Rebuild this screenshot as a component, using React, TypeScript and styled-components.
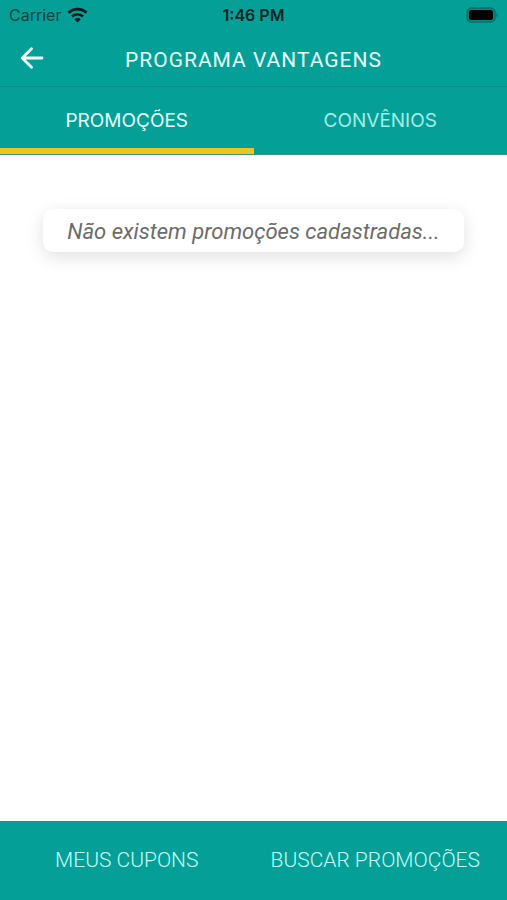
import React from "react";
import styled, { createGlobalStyle } from "styled-components";

const Global = createGlobalStyle`
  * { box-sizing: border-box; }
  html, body { margin: 0; background: #fff; }
  button { font: inherit; color: inherit; background: none; border: 0; padding: 0; cursor: pointer; }
`;

const Screen = styled.div`
  min-height: 100vh;
  display: flex;
  flex-direction: column;
  font-family: Inter, sans-serif;
  background: #fff;
`;

const Header = styled.header`
  background: #04a098;
  color: #e6fffd;
`;

const StatusBar = styled.div`
  height: 30px;
  padding: 0 9px;
  display: grid;
  grid-template-columns: 1fr auto 1fr;
  align-items: center;
  color: #06413e;
  font-size: 16px;
`;

const Carrier = styled.div`
  display: flex;
  align-items: center;
  gap: 6px;
`;

const Clock = styled.time`
  color: #052524;
  font-weight: 600;
`;

const Battery = styled.svg`
  justify-self: end;
`;

const TitleBar = styled.div`
  height: 57px;
  padding: 0 20px;
  display: grid;
  grid-template-columns: 24px 1fr 24px;
  align-items: center;
  border-bottom: 1px solid #078f89;
`;

const BackButton = styled.button`
  display: flex;
`;

const Title = styled.h1`
  margin: 0;
  padding-top: 4px;
  text-align: center;
  font: 400 21px/28px Roboto, sans-serif;
  letter-spacing: 1px;
`;

const Tabs = styled.div`
  display: grid;
  grid-template-columns: 1fr 1fr;
  border-bottom: 1px solid #3b9a84;
`;

const Tab = styled.button<{ $active?: boolean }>`
  && {
    height: 67px;
    padding-top: 6px;
    border-bottom: 6px solid ${(p) => (p.$active ? "#ecc51f" : "transparent")};
    color: ${(p) => (p.$active ? "#e6fffd" : "#a4ebe6")};
    font-size: 19px;
    font-weight: 400;
  }
`;

const Content = styled.main`
  flex: 1;
  padding: 54px 43px;
`;

const Notice = styled.p`
  margin: 0;
  padding: 9px 20px 7px;
  border-radius: 10px;
  background: #fff;
  box-shadow: 0 5px 18px rgba(0, 0, 0, 0.12);
  color: #6c6c6c;
  font: italic 400 22px/27px Roboto, sans-serif;
  text-align: center;
`;

const Footer = styled.footer`
  height: 79px;
  padding-bottom: 2px;
  display: grid;
  grid-template-columns: 1fr 1fr;
  background: #04a098;
  color: #c4fbf7;
`;

const FooterButton = styled.button`
  && {
    font: 300 21px/28px Roboto, sans-serif;
  }
  &&:last-child {
    padding-right: 10px;
  }
`;

export default function App() {
  return (
    <Screen>
      <Global />
      <Header>
        <StatusBar>
          <Carrier>
            <span>Carrier</span>
            <svg width="21" height="16" viewBox="0 0 21 16" fill="none" stroke="#041a1a" strokeWidth="2.7" aria-hidden="true">
              <path d="M1.500 5.800a12.700 12.700 0 0 1 18 0M5 9.500a7.800 7.800 0 0 1 11 0" />
              <path d="M10.500 15.500 7.400 12.300a4.400 4.400 0 0 1 6.200 0z" fill="#041a1a" stroke="none" />
            </svg>
          </Carrier>
          <Clock>1:46 PM</Clock>
          <Battery width="32" height="16" viewBox="0 0 32 16" role="img" aria-label="Bateria">
            <rect x="1" y="1" width="28" height="14" rx="4.500" fill="#068880" stroke="#08706a" strokeWidth="1.500" />
            <rect x="3" y="3" width="24" height="10" rx="2.500" fill="#000" />
            <path d="M30.500 5.500v5q1.500-1 1.500-2.500t-1.500-2.500" fill="#08706a" />
          </Battery>
        </StatusBar>
        <TitleBar>
          <BackButton aria-label="Voltar">
            <svg width="24" height="24" viewBox="0 0 24 24" fill="none" stroke="#f2ffff" strokeWidth="2.800" strokeLinecap="round" strokeLinejoin="round">
              <path d="M22 12H2.500M11.500 2.800 2.200 12l9.300 9.200" />
            </svg>
          </BackButton>
          <Title>PROGRAMA VANTAGENS</Title>
        </TitleBar>
        <Tabs role="tablist">
          <Tab role="tab" aria-selected="true" $active>PROMOÇÕES</Tab>
          <Tab role="tab" aria-selected="false">CONVÊNIOS</Tab>
        </Tabs>
      </Header>
      <Content>
        <Notice>Não existem promoções cadastradas...</Notice>
      </Content>
      <Footer>
        <FooterButton>MEUS CUPONS</FooterButton>
        <FooterButton>BUSCAR PROMOÇÕES</FooterButton>
      </Footer>
    </Screen>
  );
}
